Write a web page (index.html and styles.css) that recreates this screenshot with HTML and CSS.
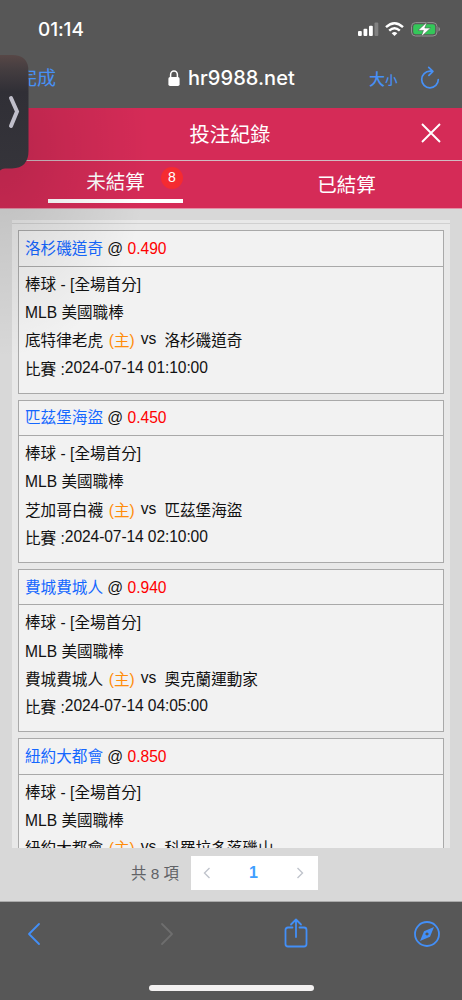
FILE: index.html
```html
<!DOCTYPE html>
<html lang="zh-Hant">
<head>
<meta charset="utf-8">
<meta name="viewport" content="width=device-width">
<title>投注紀錄</title>
<link rel="stylesheet" href="styles.css">
</head>
<body>
<div class="phone">
  <div class="status">
    <span class="clock">01:14</span>
    <svg class="status-icons" width="84" height="18" viewBox="0 0 84 18">
      <g fill="#fff"><rect x="0" y="10" width="3.8" height="5" rx="1"/><rect x="5.5" y="7.8" width="3.8" height="7.2" rx="1"/><rect x="11" y="4.8" width="3.8" height="10.2" rx="1"/><rect x="16.5" y="1.5" width="3.8" height="13.5" rx="1" opacity=".25"/></g>
      <g fill="none" stroke="#fff" stroke-width="2.4"><path d="M28 6.2Q36.5-1.8 45 6.2"/><path d="M31.2 9.6Q36.5 4.7 41.8 9.6"/></g>
      <path d="M33.7 12.2Q36.5 9.8 39.3 12.2L36.5 15Z" fill="#fff"/>
      <rect x="53.5" y="1.6" width="25.5" height="13.4" rx="4" fill="none" stroke="#929292"/>
      <rect x="55.2" y="3.3" width="22" height="10" rx="2.4" fill="#34c759"/>
      <path d="M80.5 6v4.6q1.5-.6 1.5-2.3T80.5 6Z" fill="#929292"/>
      <path d="M69.2.8 60 9.4h5.4L63 15.9l9.6-8.9h-5.8Z" fill="#fff" stroke="#4c5a50" stroke-width=".6"/>
    </svg>
  </div>
  <div class="browser-bar">
    <span class="done">完成</span>
    <span class="address">
      <svg width="12" height="17" viewBox="0 0 12 17"><rect x=".4" y="7" width="11.2" height="9" rx="1.7" fill="#fff"/><path d="M2.6 8V4.7a3.4 3.7 0 0 1 6.8 0V8" fill="none" stroke="#fff" stroke-width="1.5"/></svg>
      <span>hr9988.net</span>
    </span>
    <span class="size">大<small>小</small></span>
    <svg class="reload" width="20" height="24" viewBox="0 0 20 24" fill="none" stroke="#4790f5" stroke-width="1.7" stroke-linecap="round" stroke-linejoin="round"><path d="M11.5 5.2H10A8.3 8.3 0 1 0 18.3 13.6M8.7 1.3l4.2 4-4 4"/></svg>
  </div>

  <header class="title-bar">
    <h1>投注紀錄</h1>
    <svg class="close" width="20" height="20" viewBox="0 0 20 20" stroke="#fff" stroke-width="1.9"><path d="M1 1l18 18M19 1 1 19"/></svg>
  </header>
  <nav class="tabs">
    <div class="tab active"><span class="tab-text">未結算</span><span class="badge">8</span></div>
    <div class="tab"><span class="tab-text">已結算</span></div>
  </nav>

  <main class="content">
    <div class="list">
      <article class="card">
        <div class="pick"><span class="team">洛杉磯道奇</span> @ <span class="odds">0.490</span></div>
        <div class="detail"><p>棒球 - [全場首分]</p><p>MLB 美國職棒</p>
        <p>底特律老虎 <span class="home">(主)</span><span class="vs">vs</span>洛杉磯道奇</p>
        <p>比賽 :<span class="time">2024-07-14 01:10:00</span></p></div>
      </article>
      <article class="card">
        <div class="pick"><span class="team">匹茲堡海盜</span> @ <span class="odds">0.450</span></div>
        <div class="detail"><p>棒球 - [全場首分]</p><p>MLB 美國職棒</p>
        <p>芝加哥白襪 <span class="home">(主)</span><span class="vs">vs</span>匹茲堡海盜</p>
        <p>比賽 :<span class="time">2024-07-14 02:10:00</span></p></div>
      </article>
      <article class="card">
        <div class="pick"><span class="team">費城費城人</span> @ <span class="odds">0.940</span></div>
        <div class="detail"><p>棒球 - [全場首分]</p><p>MLB 美國職棒</p>
        <p>費城費城人 <span class="home">(主)</span><span class="vs">vs</span>奧克蘭運動家</p>
        <p>比賽 :<span class="time">2024-07-14 04:05:00</span></p></div>
      </article>
      <article class="card">
        <div class="pick"><span class="team">紐約大都會</span> @ <span class="odds">0.850</span></div>
        <div class="detail"><p>棒球 - [全場首分]</p><p>MLB 美國職棒</p>
        <p>紐約大都會 <span class="home">(主)</span><span class="vs">vs</span>科羅拉多落磯山</p></div>
      </article>
    </div>
    <div class="pagination">
      <span class="total">共 8 項</span>
      <div class="pager">
        <svg width="8" height="12" viewBox="0 0 8 12"><path d="M6.5 1 1.5 6l5 5"/></svg>
        <b>1</b>
        <svg width="8" height="12" viewBox="0 0 8 12"><path d="m1.5 1 5 5-5 5"/></svg>
      </div>
    </div>
  </main>

  <footer class="toolbar">
    <div class="tools">
      <svg width="14" height="24" viewBox="0 0 14 24"><path d="M12 2 2 12l10 10"/></svg>
      <svg class="disabled" width="14" height="24" viewBox="0 0 14 24"><path d="m2 2 10 10L2 22"/></svg>
      <svg width="24" height="30" viewBox="0 0 24 30"><path d="M8.5 9.5H4Q1.5 9.5 1.5 12v14q0 2.5 2.5 2.5h16q2.5 0 2.5-2.5V12q0-2.5-2.5-2.5h-4.5M12 19V2M7 6.5l5-5 5 5"/></svg>
      <svg width="26" height="26" viewBox="0 0 26 26"><circle cx="13" cy="13" r="12"/><path class="needle" fill-rule="evenodd" d="M20 6 16 15.8 6 20 10 10.2ZM13 11.4a1.6 1.6 0 1 0 .01 0Z"/></svg>
    </div>
    <div class="home-bar"></div>
  </footer>

  <div class="shade"></div>
  <svg class="handle" width="30" height="118" viewBox="0 0 30 118">
    <defs><linearGradient id="dark" x1="0" y1="0" x2="0" y2="1"><stop stop-color="#574746"/><stop offset=".13" stop-color="#443d40"/><stop offset=".32" stop-color="#302f36"/><stop offset="1" stop-color="#35343a"/></linearGradient></defs>
    <path d="M0 1H12Q28.5 1 28.5 17V97Q28.5 114 12 114.5H5Q2 114.5 0 116.5Z" fill="url(#dark)"/>
    <path d="M11 44 17 57.5 11 72" fill="none" stroke="#c0bfcb" stroke-width="4" stroke-linecap="round"/>
  </svg>
</div>
</body>
</html>
```
FILE: styles.css
```css
* { box-sizing: border-box; }
body { margin: 0; background: #575757; }
h1, p { margin: 0; font-weight: inherit; }
svg { display: block; flex: none; }

.phone {
  position: relative;
  width: 462px;
  height: 1000px;
  overflow: hidden;
  display: flex;
  flex-direction: column;
  font-family: "Liberation Sans", "Noto Sans CJK TC", sans-serif;
  font-weight: 400;
  color: #111;
}

.status {
  height: 56px;
  padding: 4px 20px 0 38px;
  display: flex;
  align-items: center;
  justify-content: space-between;
}
.clock { color: #fff; font: 500 19px/24px Inter, sans-serif; letter-spacing: -0.1px; }
.status-icons { margin-top: -1px; }

.browser-bar {
  height: 52px;
  padding: 0 22px 8px 18px;
  display: grid;
  grid-template-columns: 150px 1fr 72px 20px;
  align-items: center;
  color: #4790f5;
}
.done { font-size: 19px; line-height: 24px; padding-top: 2px; }
.address { display: flex; align-items: center; gap: 8px; color: #fff; font: 500 20px/24px Inter, sans-serif; letter-spacing: 0.05px; }
.size { padding: 0 0 0 21px; font-size: 16px; font-weight: 500; white-space: nowrap; }
.size small { font-size: 12.5px; }

.title-bar {
  height: 53px;
  padding: 0 21px 0 19px;
  display: grid;
  grid-template-columns: 20px 1fr 20px;
  align-items: center;
  background: #d52b57;
  border-bottom: 1px solid #d0bcc2;
  color: #fff;
}
.title-bar h1 { grid-column: 2; padding-top: 1px; font-size: 20.2px; line-height: 24px; text-align: center; }
.close { margin-top: -2px; }

.tabs { height: 48px; display: flex; background: #d52b57; color: #fff; border-bottom: 1px solid #e390a6; }
.tab { width: 231px; display: flex; justify-content: center; font-size: 19.5px; line-height: 24px; padding-top: 12px; }
.tab.active {
  position: relative;
  width: 135px;
  height: 42px;
  margin: 0 48px;
  padding-top: 9px;
  border-bottom: 4px solid #fff;
}
.badge {
  position: absolute;
  right: 0;
  top: 6px;
  width: 22px;
  height: 22px;
  border-radius: 50%;
  background: #f52b31;
  font-size: 14px;
  line-height: 21px;
  text-align: center;
}

.content { height: 693px; padding: 11px 12px 0; background: #d8d8d8; border-bottom: 1px solid #aaa; }
.list {
  height: 628px;
  overflow: hidden;
  background: #e8e8e8;
  padding: 3px 6px 0;
}
.list::before { content: ""; display: block; height: 6.4px; margin: 0 -6px; border-top: 1px solid #d0d0d0; }
.card {
  height: 163.3px;
  margin-bottom: 6px;
  border: 1px solid #a9a9a9;
  background: #f2f2f2;
  font-size: 15.6px;
}
.pick { height: 35.3px; padding: 5.8px 6px 0; line-height: 24px; border-bottom: 1px solid #a9a9a9; }
.team { color: #1467ff; }
.odds { color: #f00; }
.detail { padding: 4.2px 6px; line-height: 28.3px; white-space: nowrap; }
.detail p { height: 28.3px; }
.home { margin-left: 1.5px; color: #ff8c0a; }
.vs { margin: 0 8px 0 6px; vertical-align: 2px; line-height: 1; }
.time { vertical-align: 2px; line-height: 1; letter-spacing: -0.1px; }

.pagination { padding: 8px 0 0 119px; display: flex; align-items: center; color: #606266; }
.total { width: 60px; padding-bottom: 2px; font-size: 15.4px; white-space: nowrap; }
.pager {
  width: 127px;
  height: 34px;
  padding: 0 14px 0 12px;
  display: flex;
  align-items: center;
  justify-content: space-between;
  background: #fff;
}
.pager svg { fill: none; stroke: #c0c4cc; stroke-width: 1.4; }
.pager b { color: #409eff; font-size: 16px; font-weight: 700; }

.toolbar { height: 98px; background: #575757; }
.tools { height: 63px; padding: 0 22px 0 27px; display: flex; align-items: center; justify-content: space-between; }
.tools svg { fill: none; stroke: #438ff7; stroke-width: 1.8; stroke-linecap: round; stroke-linejoin: round; }
.tools svg:nth-child(2) { margin-left: 8px; }
.tools svg:nth-child(3) { margin: -2px -5px 0 0; }
.tools .disabled { stroke: #6e6e6e; }
.tools .needle { fill: #438ff7; stroke: none; }
.home-bar { width: 165px; height: 6px; margin: 20px auto 0; border-radius: 3px; background: #f3f1f1; }

.shade {
  position: absolute;
  left: 0;
  top: 108px;
  width: 200px;
  height: 262px;
  background: radial-gradient(ellipse 150px 210px at 0 40px, rgba(0,0,0,.14), rgba(0,0,0,.07) 45%, transparent);
}
.handle { position: absolute; left: 0; top: 54px; }
```
